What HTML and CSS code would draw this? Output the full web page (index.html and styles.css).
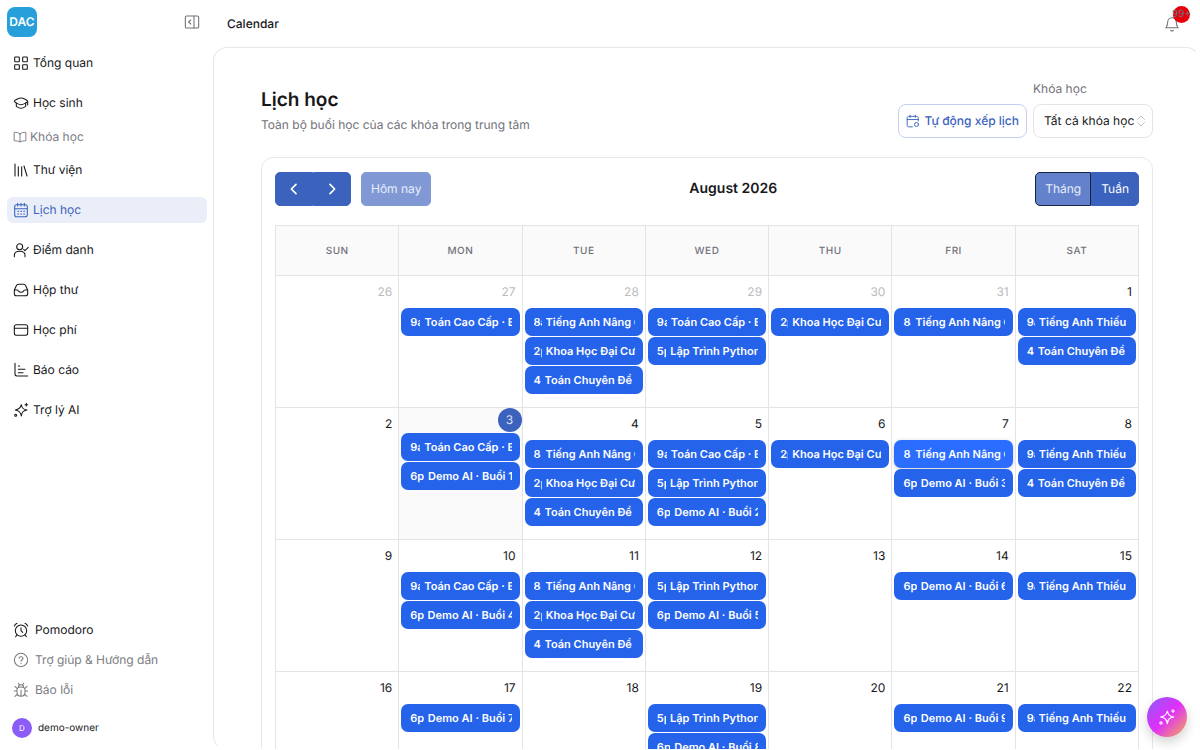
FILE: index.html
```html
<!DOCTYPE html>
<html lang="vi">
<head>
  <meta charset="UTF-8" />
  <meta name="viewport" content="width=device-width, initial-scale=1.0"/>
  <title>Lịch học</title>
  <link rel="stylesheet" href="styles.css">
</head>
<body>

<!-- Sidebar -->
<aside class="sidebar">
  <div class="sidebar-top">
    <a href="#" class="logo">DAC</a>
    <button type="button" class="icon-button" aria-label="Thu gọn">
      <svg class="icon" viewBox="0 0 24 24"><rect x="2" y="3" width="20" height="18" rx="2"/><path d="M15 3v18M10 9l-3 3 3 3"/></svg>
    </button>
  </div>

  <nav class="menu">
    <a href="#" class="menu-item">
      <svg class="icon" viewBox="0 0 24 24"><rect x="2.500" y="3" width="7" height="7" rx="1"/><rect x="14.500" y="3" width="7" height="7" rx="1"/><rect x="2.500" y="14.500" width="7" height="7" rx="1"/><rect x="14.500" y="14.500" width="7" height="7" rx="1"/></svg>
      Tổng quan
    </a>
    <a href="#" class="menu-item">
      <svg class="icon" viewBox="0 0 24 24"><path d="M2 9.500c0-1.500 7-5 10-5s10 3.500 10 5-7 5-10 5-10-3.500-10-5z"/><path d="M5 12v5c2 1.500 4 3 7 3s5-1.500 7-3v-5M22 10v5"/></svg>
      Học sinh
    </a>
    <a href="#" class="menu-label">
      <svg class="icon" viewBox="0 0 24 24"><path d="M12 6.500C10 4.500 6 4 2 4v14.500c4 0 8 .5 10 2 2-1.500 6-2 10-2V4c-4 0-8 .5-10 2.500zM12 6.500v14"/></svg>
      Khóa học
    </a>
    <a href="#" class="menu-item">
      <svg class="icon" viewBox="0 0 24 24"><path d="M3 3v18M8 7v14M13 7v14M16.500 6l4.500 15"/></svg>
      Thư viện
    </a>
    <a href="#" class="menu-item active">
      <svg class="icon" viewBox="0 0 24 24"><rect x="2.500" y="4" width="19" height="18" rx="3"/><path d="M7 2v4M12 2v4M17 2v4M3 10h18M7 14h1.500M11.500 14H13M16 14h1.500M7 18h1.500M11.500 18H13M16 18h1.500"/></svg>
      Lịch học
    </a>
    <a href="#" class="menu-item">
      <svg class="icon" viewBox="0 0 24 24"><circle cx="10" cy="7" r="4.500"/><path d="M2 22v-2c0-4 3-6 8-6s8 2 8 6v2M16 11l2 2 5-5"/></svg>
      Điểm danh
    </a>
    <a href="#" class="menu-item">
      <svg class="icon" viewBox="0 0 24 24"><path d="M2 12l3-6.500C5.700 4 6.500 3.500 8 3.500h8c1.500 0 2.300.5 3 2l3 6.500v5.500a3 3 0 0 1-3 3H5a3 3 0 0 1-3-3zM2 12h4c1.500 0 2 .7 2.500 1.800C9 15 10 15.500 12 15.500s3-.5 3.500-1.700C16 12.700 16.500 12 18 12h4"/></svg>
      Hộp thư
    </a>
    <a href="#" class="menu-item">
      <svg class="icon" viewBox="0 0 24 24"><rect x="2" y="4" width="20" height="16" rx="3"/><path d="M2 9.500h20"/></svg>
      Học phí
    </a>
    <a href="#" class="menu-item">
      <svg class="icon" viewBox="0 0 24 24"><path d="M3 2v16c0 2 1 3 3 3h16M8 6h2M8 11h10M8 16h7"/></svg>
      Báo cáo
    </a>
    <a href="#" class="menu-item">
      <svg class="icon" viewBox="0 0 24 24"><path d="M12.500 4c1 5 2.500 7 8.500 8-6 1-7.500 3-8.500 9-1-6-3-8-9-9 6-1 8-3 9-8zM20 2v4M18 4h4"/><circle cx="4" cy="20" r="1.500"/></svg>
      Trợ lý AI
    </a>
  </nav>

  <div class="sidebar-bottom">
    <a href="#" class="bottom-item dark">
      <svg class="icon" viewBox="0 0 24 24"><circle cx="12" cy="13" r="8.500"/><path d="M12 8.500V13l2.500 2.500M2 6c.8-2 2-3.200 4-4M22 6c-.8-2-2-3.200-4-4M6 19.500L4 22M18 19.500l2 2.500"/></svg>
      Pomodoro
    </a>
    <a href="#" class="bottom-item">
      <svg class="icon" viewBox="0 0 24 24"><circle cx="12" cy="12" r="10"/><path d="M9 9.500C9 8 10.300 7 12 7s3 1 3 2.500c0 2-3 2.200-3 4.500M12 17v.5"/></svg>
      Trợ giúp &amp; Hướng dẫn
    </a>
    <a href="#" class="bottom-item">
      <svg class="icon" viewBox="0 0 24 24"><path d="M6 12c0-3 2.500-4.500 6-4.500s6 1.500 6 4.500v3.500c0 3.500-2.500 6-6 6s-6-2.500-6-6zM12 12v9M8 8c0-2.500 1.500-4 4-4s4 1.500 4 4M9.500 4L8 2M14.500 4L16 2M6 13.500H2M22 13.500h-4M6.500 10L3 6.500M17.500 10L21 6.500M7 18l-4 3.500M17 18l4 3.500"/></svg>
      Báo lỗi
    </a>
    <a href="#" class="user">
      <span class="avatar">D</span>
      demo-owner
    </a>
  </div>
</aside>

<div class="page">
  <header class="topbar">
    <span>Calendar</span>
    <button type="button" class="icon-button bell" aria-label="Thông báo">
      <svg class="icon" viewBox="0 0 24 24"><path d="M5.500 9.500C5.500 5.500 8 2.500 12 2.500s6.500 3 6.500 7c0 4 1 5 2.500 8H3c1.500-3 2.500-4 2.500-8zM10 21.500c1 1 3 1 4 0"/></svg>
      <span class="badge">99+</span>
    </button>
  </header>

  <main class="content">
    <div class="heading">
      <div>
        <h1>Lịch học</h1>
        <p>Toàn bộ buổi học của các khóa trong trung tâm</p>
      </div>
      <div class="actions">
        <button type="button" class="outline-button">
          <svg class="icon" viewBox="0 0 24 24"><path d="M21 12V7c0-2-1-3-3-3H5C3 4 2 5 2 7v12c0 2 1 3 3 3h6M7 2v4M16 2v4M2 9.500h19"/><circle cx="18" cy="18" r="3.500"/></svg>
          Tự động xếp lịch
        </button>
        <div class="field">
          <label for="course">Khóa học</label>
          <div class="select-wrap">
            <select id="course">
              <option>Tất cả khóa học</option>
            </select>
            <svg class="icon" viewBox="0 0 24 24"><path d="M5 9l7-7 7 7M5 15l7 7 7-7"/></svg>
          </div>
        </div>
      </div>
    </div>

    <section class="calendar">
      <div class="toolbar">
        <div class="toolbar-left">
          <div class="button-group arrows">
            <button type="button" aria-label="Trước"><svg class="icon" viewBox="0 0 24 24"><path d="M15 5l-7 7 7 7"/></svg></button>
            <button type="button" aria-label="Sau"><svg class="icon" viewBox="0 0 24 24"><path d="M9 5l7 7-7 7"/></svg></button>
          </div>
          <button type="button" class="today-button" disabled>Hôm nay</button>
        </div>
        <h2>August 2026</h2>
        <div class="button-group">
          <button type="button" class="selected">Tháng</button>
          <button type="button">Tuần</button>
        </div>
      </div>

      <table class="month">
        <thead>
          <tr><th>SUN</th><th>MON</th><th>TUE</th><th>WED</th><th>THU</th><th>FRI</th><th>SAT</th></tr>
        </thead>
        <tbody>
          <tr>
            <td class="other"><div class="day">26</div></td>
            <td class="other"><div class="day">27</div>
              <a href="#" class="event"><span class="time">9a</span><span class="name">Toán Cao Cấp · Buổi 1</span></a>
            </td>
            <td class="other"><div class="day">28</div>
              <a href="#" class="event"><span class="time">8a</span><span class="name">Tiếng Anh Nâng Cao · Buổi 1</span></a>
              <a href="#" class="event"><span class="time">2p</span><span class="name">Khoa Học Đại Cương · Buổi 1</span></a>
              <a href="#" class="event"><span class="time">4p</span><span class="name">Toán Chuyên Đề Nâng Cao · Buổi 1</span></a>
            </td>
            <td class="other"><div class="day">29</div>
              <a href="#" class="event"><span class="time">9a</span><span class="name">Toán Cao Cấp · Buổi 2</span></a>
              <a href="#" class="event"><span class="time">5p</span><span class="name">Lập Trình Python · Buổi 1</span></a>
            </td>
            <td class="other"><div class="day">30</div>
              <a href="#" class="event"><span class="time">2p</span><span class="name">Khoa Học Đại Cương · Buổi 2</span></a>
            </td>
            <td class="other"><div class="day">31</div>
              <a href="#" class="event"><span class="time">8a</span><span class="name">Tiếng Anh Nâng Cao · Buổi 2</span></a>
            </td>
            <td><div class="day">1</div>
              <a href="#" class="event"><span class="time">9a</span><span class="name">Tiếng Anh Thiếu Nhi · Buổi 1</span></a>
              <a href="#" class="event"><span class="time">4p</span><span class="name">Toán Chuyên Đề Nâng Cao · Buổi 2</span></a>
            </td>
          </tr>
          <tr>
            <td><div class="day">2</div></td>
            <td class="today"><div class="day">3</div>
              <a href="#" class="event"><span class="time">9a</span><span class="name">Toán Cao Cấp · Buổi 3</span></a>
              <a href="#" class="event"><span class="time">6p</span><span class="name">Demo AI · Buổi 1</span></a>
            </td>
            <td><div class="day">4</div>
              <a href="#" class="event"><span class="time">8a</span><span class="name">Tiếng Anh Nâng Cao · Buổi 3</span></a>
              <a href="#" class="event"><span class="time">2p</span><span class="name">Khoa Học Đại Cương · Buổi 3</span></a>
              <a href="#" class="event"><span class="time">4p</span><span class="name">Toán Chuyên Đề Nâng Cao · Buổi 3</span></a>
            </td>
            <td><div class="day">5</div>
              <a href="#" class="event"><span class="time">9a</span><span class="name">Toán Cao Cấp · Buổi 4</span></a>
              <a href="#" class="event"><span class="time">5p</span><span class="name">Lập Trình Python · Buổi 2</span></a>
              <a href="#" class="event"><span class="time">6p</span><span class="name">Demo AI · Buổi 2</span></a>
            </td>
            <td><div class="day">6</div>
              <a href="#" class="event"><span class="time">2p</span><span class="name">Khoa Học Đại Cương · Buổi 4</span></a>
            </td>
            <td><div class="day">7</div>
              <a href="#" class="event hovered"><span class="time">8a</span><span class="name">Tiếng Anh Nâng Cao · Buổi 4</span></a>
              <a href="#" class="event"><span class="time">6p</span><span class="name">Demo AI · Buổi 3</span></a>
            </td>
            <td><div class="day">8</div>
              <a href="#" class="event"><span class="time">9a</span><span class="name">Tiếng Anh Thiếu Nhi · Buổi 2</span></a>
              <a href="#" class="event"><span class="time">4p</span><span class="name">Toán Chuyên Đề Nâng Cao · Buổi 4</span></a>
            </td>
          </tr>
          <tr>
            <td><div class="day">9</div></td>
            <td><div class="day">10</div>
              <a href="#" class="event"><span class="time">9a</span><span class="name">Toán Cao Cấp · Buổi 5</span></a>
              <a href="#" class="event"><span class="time">6p</span><span class="name">Demo AI · Buổi 4</span></a>
            </td>
            <td><div class="day">11</div>
              <a href="#" class="event"><span class="time">8a</span><span class="name">Tiếng Anh Nâng Cao · Buổi 5</span></a>
              <a href="#" class="event"><span class="time">2p</span><span class="name">Khoa Học Đại Cương · Buổi 5</span></a>
              <a href="#" class="event"><span class="time">4p</span><span class="name">Toán Chuyên Đề Nâng Cao · Buổi 5</span></a>
            </td>
            <td><div class="day">12</div>
              <a href="#" class="event"><span class="time">5p</span><span class="name">Lập Trình Python · Buổi 3</span></a>
              <a href="#" class="event"><span class="time">6p</span><span class="name">Demo AI · Buổi 5</span></a>
            </td>
            <td><div class="day">13</div></td>
            <td><div class="day">14</div>
              <a href="#" class="event"><span class="time">6p</span><span class="name">Demo AI · Buổi 6</span></a>
            </td>
            <td><div class="day">15</div>
              <a href="#" class="event"><span class="time">9a</span><span class="name">Tiếng Anh Thiếu Nhi · Buổi 3</span></a>
            </td>
          </tr>
          <tr>
            <td><div class="day">16</div></td>
            <td><div class="day">17</div>
              <a href="#" class="event"><span class="time">6p</span><span class="name">Demo AI · Buổi 7</span></a>
            </td>
            <td><div class="day">18</div></td>
            <td><div class="day">19</div>
              <a href="#" class="event"><span class="time">5p</span><span class="name">Lập Trình Python · Buổi 4</span></a>
              <a href="#" class="event"><span class="time">6p</span><span class="name">Demo AI · Buổi 8</span></a>
            </td>
            <td><div class="day">20</div></td>
            <td><div class="day">21</div>
              <a href="#" class="event"><span class="time">6p</span><span class="name">Demo AI · Buổi 9</span></a>
            </td>
            <td><div class="day">22</div>
              <a href="#" class="event"><span class="time">9a</span><span class="name">Tiếng Anh Thiếu Nhi · Buổi 4</span></a>
            </td>
          </tr>
        </tbody>
      </table>
    </section>
  </main>
</div>

<!-- AI assistant -->
<button type="button" class="assistant" aria-label="Trợ lý AI">
  <svg class="icon" viewBox="0 0 24 24"><path d="M12.500 4c1 5 2.500 7 8.500 8-6 1-7.500 3-8.500 9-1-6-3-8-9-9 6-1 8-3 9-8zM20 2v4M18 4h4"/><circle cx="4" cy="20" r="1.500"/></svg>
</button>

</body>
</html>
```

FILE: styles.css
```css
* {
  box-sizing: border-box;
  margin: 0;
  padding: 0;
}

body {
  height: 100vh;
  overflow: hidden;
  display: flex;
  font-family: Inter, "Noto Sans", sans-serif;
  font-size: 12px;
  line-height: 16px;
  text-rendering: geometricPrecision;
  color: #18181b;
  background: #fff;
}

button,
select {
  font: inherit;
  color: inherit;
  text-rendering: inherit;
  border: none;
  background: none;
  cursor: pointer;
}

a {
  color: inherit;
  text-decoration: none;
}

.icon {
  width: 16px;
  height: 16px;
  flex: none;
  fill: none;
  stroke: currentColor;
  stroke-width: 1.6;
  stroke-linecap: round;
  stroke-linejoin: round;
}

/* Sidebar */
.sidebar {
  width: 213px;
  flex: none;
  display: flex;
  flex-direction: column;
  padding: 7px 6px 12px 7px;
}

.sidebar-top {
  display: flex;
  align-items: center;
  justify-content: space-between;
  padding-right: 7px;
  margin-bottom: 13px;
}

.logo {
  width: 30px;
  height: 30px;
  border-radius: 8px;
  background: #279fdb;
  color: #fff;
  font-size: 12px;
  font-weight: 600;
  line-height: 30px;
  text-align: center;
}

.icon-button {
  display: flex;
  color: #71717a;
}

.menu {
  display: flex;
  flex-direction: column;
}

.menu-item {
  display: flex;
  align-items: center;
  gap: 4px;
  height: 26px;
  padding: 0 6px;
  margin-bottom: 14px;
  border-radius: 6px;
}

.menu-label {
  display: flex;
  align-items: center;
  gap: 3px;
  height: 14px;
  padding: 0 6px;
  margin-bottom: 13px;
  color: #7c7c82;
}

.menu-label .icon {
  width: 14px;
  height: 14px;
}

.menu-item.active {
  background: #e9eef8;
  color: #3b63be;
}

.sidebar-bottom {
  margin-top: auto;
}

.bottom-item {
  display: flex;
  align-items: center;
  gap: 6px;
  height: 30px;
  padding: 0 6px;
  color: #7c7c82;
}

.bottom-item.dark {
  color: #18181b;
}

.user {
  display: flex;
  align-items: center;
  gap: 6px;
  margin-top: 13px;
  padding: 0 5px;
  font-size: 10px;
}

.avatar {
  width: 20px;
  height: 20px;
  border-radius: 50%;
  background: #8b5cf6;
  color: #fff;
  font-size: 8px;
  line-height: 20px;
  text-align: center;
}

/* Page */
.page {
  flex: 1;
  min-width: 0;
  display: flex;
  flex-direction: column;
}

.topbar {
  height: 47px;
  flex: none;
  display: flex;
  align-items: center;
  justify-content: space-between;
  padding: 0 20px 0 14px;
  font-weight: 500;
}

.bell {
  position: relative;
}

.badge {
  position: absolute;
  top: -10px;
  right: -10px;
  width: 17px;
  height: 17px;
  border-radius: 50%;
  background: #e7000b;
  color: #71717a;
  font-size: 10px;
  font-weight: 400;
  line-height: 17px;
  display: flex;
  justify-content: center;
}

.content {
  flex: 1;
  min-height: 0;
  overflow: hidden;
  padding: 33px 46px 0 47px;
  border: 1px solid #e8e8ea;
  border-right-color: transparent;
  border-bottom-color: transparent;
  border-radius: 14px;
}

.heading {
  display: flex;
  align-items: flex-end;
  justify-content: space-between;
  margin-bottom: 19px;
}

.heading h1 {
  font-size: 19px;
  font-weight: 600;
  line-height: 28px;
}

.heading p {
  margin: 3px 0 5px;
  color: #71717a;
}

.actions {
  display: flex;
  align-items: flex-end;
  gap: 6px;
}

.outline-button {
  display: flex;
  align-items: center;
  gap: 4px;
  height: 34px;
  padding: 0 7px;
  border: 1px solid #c2cff0;
  border-radius: 8px;
  color: #3b63be;
  font-weight: 500;
}

.outline-button .icon {
  width: 14px;
  height: 14px;
}

.field label {
  display: block;
  margin-bottom: 7px;
  color: #71717a;
}

.select-wrap {
  position: relative;
}

.select-wrap select {
  appearance: none;
  width: 120px;
  height: 34px;
  padding: 0 10px;
  border: 1px solid #e4e4e7;
  border-radius: 8px;
}

.select-wrap .icon {
  position: absolute;
  right: 6px;
  top: 11px;
  width: 12px;
  height: 12px;
  color: #b4b4b8;
  pointer-events: none;
}

/* Calendar */
.calendar {
  padding: 14px 13px;
  border: 1px solid #e8e8ea;
  border-radius: 12px;
}

.toolbar {
  display: flex;
  align-items: center;
  justify-content: space-between;
  margin-bottom: 19px;
}

.toolbar h2 {
  font-size: 14px;
  font-weight: 600;
  line-height: 20px;
}

.toolbar-left {
  display: flex;
  gap: 10px;
}

.button-group {
  display: flex;
}

.toolbar button {
  display: flex;
  align-items: center;
  height: 34px;
  padding: 0 9px;
  background: #3b63be;
  border: 1px solid #3b63be;
  border-radius: 5px;
  color: #fff;
}

.button-group button:first-child {
  border-radius: 5px 0 0 5px;
}

.button-group button:last-child {
  border-radius: 0 5px 5px 0;
}

.toolbar .arrows button {
  padding: 0 10px;
}

.arrows .icon {
  stroke-width: 2.5;
}

.toolbar .today-button {
  background: #8099d5;
  border-color: #8099d5;
  color: #e9eefa;
}

.toolbar .selected {
  background: #6482cb;
  border-color: #17233f;
  color: #e9eefa;
}

.month {
  width: 100%;
  table-layout: fixed;
  border-collapse: collapse;
}

.month th {
  height: 50px;
  border: 1px solid #e4e4e7;
  background: #fafafa;
  color: #71717a;
  font-size: 10px;
  font-weight: 500;
  letter-spacing: 0.05em;
}

.month td {
  height: 132px;
  border: 1px solid #e4e4e7;
  vertical-align: top;
}

.day {
  height: 32px;
  padding: 0 6px;
  line-height: 32px;
  text-align: right;
}

.other .day {
  color: #bcbcc0;
}

.today {
  background: #fafafa;
}

.today .day {
  width: 24px;
  height: 24px;
  margin: 0 0 1px auto;
  padding: 0;
  border-radius: 50%;
  background: #3b63be;
  color: #d5def3;
  line-height: 24px;
  text-align: center;
}

.event {
  display: flex;
  gap: 4px;
  height: 28px;
  margin: 0 2px 1px;
  padding: 0 8px 0 9px;
  border-radius: 7px;
  background: #2563eb;
  color: #fff;
  font-size: 11px;
  font-weight: 600;
  line-height: 28px;
  white-space: nowrap;
}

.event.hovered {
  background: #2a6dff;
  box-shadow: 0 1px 4px rgba(0, 0, 0, 0.2);
}

.time {
  min-width: 0;
  overflow: hidden;
}

.name {
  flex: 1 1 auto;
  min-width: 0;
  overflow: hidden;
}

/* Floating button */
.assistant {
  position: fixed;
  right: 13px;
  bottom: 13px;
  width: 40px;
  height: 40px;
  display: flex;
  align-items: center;
  justify-content: center;
  border-radius: 50%;
  background: linear-gradient(135deg, #8b5cf6 0%, #e02ffb 50%, #f5b04c 100%);
  box-shadow: 0 5px 12px rgba(0, 0, 0, 0.18);
  color: #fff;
}

.assistant .icon {
  width: 18px;
  height: 18px;
}
```
